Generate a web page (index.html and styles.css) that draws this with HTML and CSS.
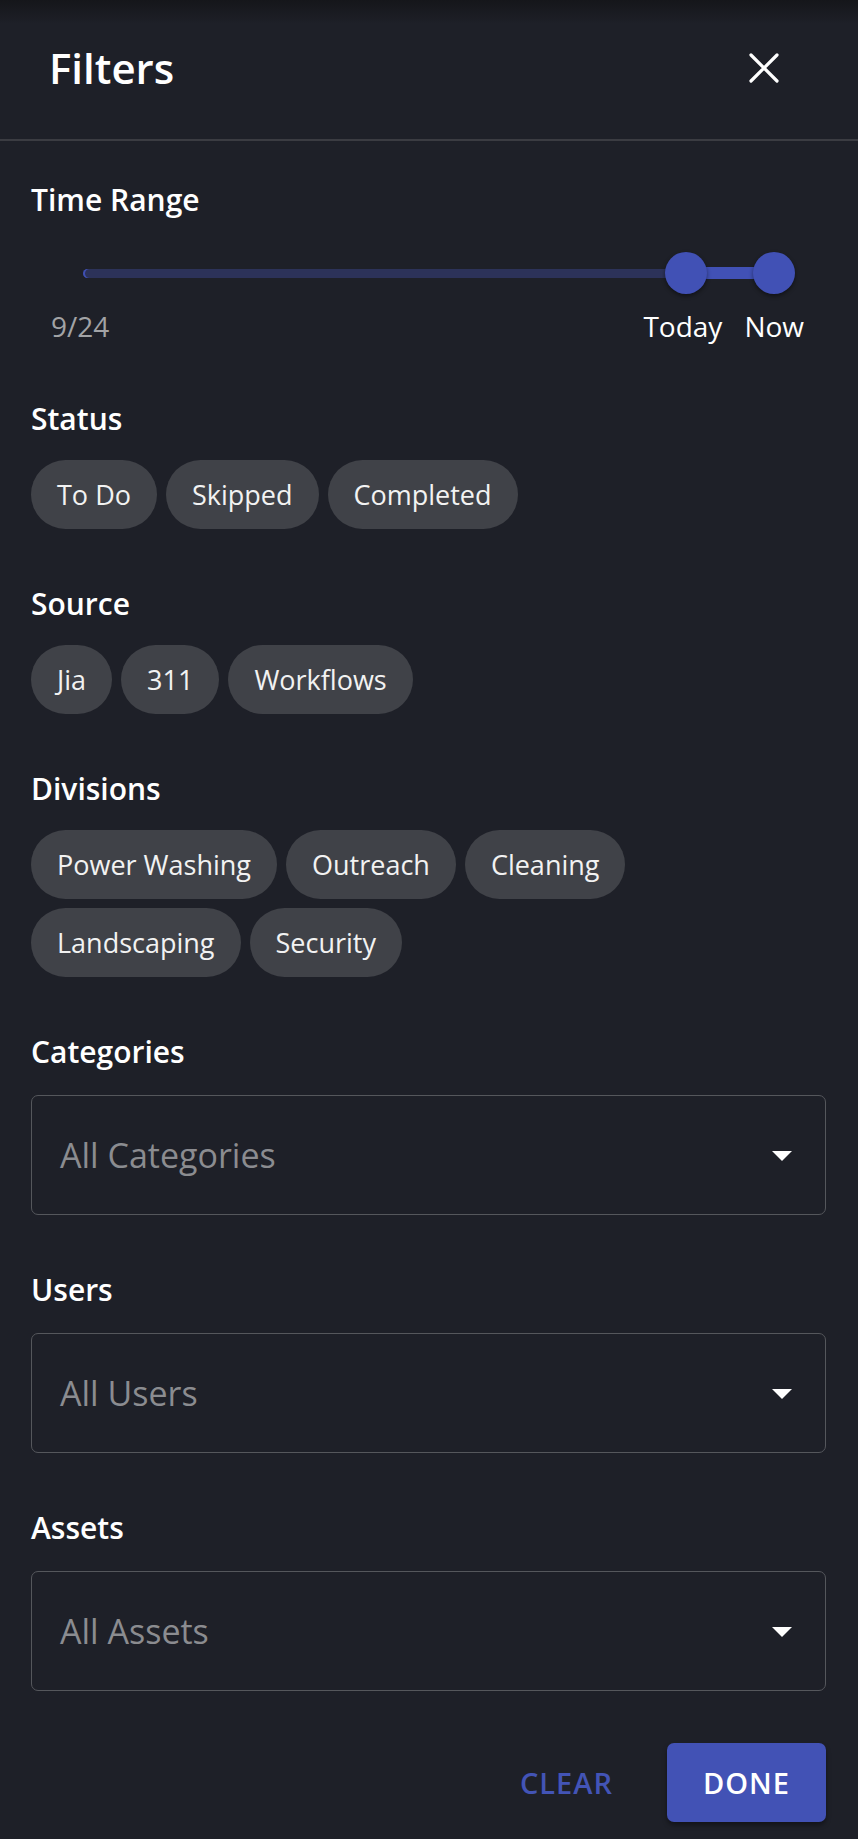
FILE: index.html
```html
<!DOCTYPE html>
<html lang="en">
<head>
<meta charset="utf-8">
<title>Filters</title>
<link rel="stylesheet" href="styles.css">
</head>
<body>
<div class="sheet">
  <header class="sheet-header">
    <h1 class="sheet-title">Filters</h1>
    <button class="icon-btn" aria-label="Close">
      <svg width="30" height="30" viewBox="0 0 30 30" aria-hidden="true">
        <path d="M2 2 L28 28 M28 2 L2 28" stroke="#ffffff" stroke-width="3.2" stroke-linecap="round" fill="none"/>
      </svg>
    </button>
  </header>

  <main class="sheet-body">
    <section class="group group-first">
      <h2 class="group-title">Time Range</h2>
      <div class="slider">
        <div class="slider-track"></div>
        <div class="slider-range"></div>
        <span class="slider-thumb thumb-start"></span>
        <span class="slider-thumb thumb-end"></span>
      </div>
      <div class="slider-labels">
        <span class="label-min">9/24</span>
        <div class="label-group">
          <span>Today</span>
          <span>Now</span>
        </div>
      </div>
    </section>

    <section class="group">
      <h2 class="group-title">Status</h2>
      <div class="chips">
        <button class="chip">To Do</button>
        <button class="chip">Skipped</button>
        <button class="chip">Completed</button>
      </div>
    </section>

    <section class="group">
      <h2 class="group-title">Source</h2>
      <div class="chips">
        <button class="chip">Jia</button>
        <button class="chip">311</button>
        <button class="chip">Workflows</button>
      </div>
    </section>

    <section class="group">
      <h2 class="group-title">Divisions</h2>
      <div class="chips">
        <button class="chip">Power Washing</button>
        <button class="chip">Outreach</button>
        <button class="chip">Cleaning</button>
        <button class="chip">Landscaping</button>
        <button class="chip">Security</button>
      </div>
    </section>

    <section class="group">
      <h2 class="group-title">Categories</h2>
      <div class="select">
        <span class="select-placeholder">All Categories</span>
        <span class="select-caret"></span>
      </div>
    </section>

    <section class="group">
      <h2 class="group-title">Users</h2>
      <div class="select">
        <span class="select-placeholder">All Users</span>
        <span class="select-caret"></span>
      </div>
    </section>

    <section class="group">
      <h2 class="group-title">Assets</h2>
      <div class="select">
        <span class="select-placeholder">All Assets</span>
        <span class="select-caret"></span>
      </div>
    </section>

    <footer class="actions">
      <button class="btn-text">CLEAR</button>
      <button class="btn-primary">DONE</button>
    </footer>
  </main>
</div>
</body>
</html>
```

FILE: styles.css
```css
html, body {
  margin: 0;
  padding: 0;
  background: #1e2028;
}

body {
  font-family: "Open Sans", "Noto Sans", sans-serif;
  color: #ffffff;
}

button {
  font-family: inherit;
  border: 0;
  margin: 0;
  cursor: pointer;
}

.sheet {
  width: 858px;
  min-height: 1839px;
  background: #1e2028;
}

/* Header */
.sheet-header {
  height: 136px;
  padding: 0 79px 3px 49px;
  display: flex;
  align-items: center;
  justify-content: space-between;
  border-bottom: 2px solid #3b3c42;
  background: linear-gradient(#15161a 0, #1e2028 24px);
}

.sheet-title {
  margin: 0;
  font-size: 42px;
  line-height: 52px;
  font-weight: 600;
  color: #ffffff;
}

.icon-btn {
  width: 30px;
  height: 30px;
  padding: 0;
  background: none;
  display: flex;
}

/* Body */
.sheet-body {
  padding: 0 32px 0 31px;
}

.group {
  margin-top: 57px;
}

.group-first {
  margin-top: 41px;
}

.group-title {
  margin: 0;
  font-size: 30px;
  line-height: 36px;
  font-weight: 600;
  color: #ffffff;
}

/* Range slider */
.slider {
  position: relative;
  height: 42px;
  width: 712px;
  margin: 34px 0 0 52px;
  display: flex;
  align-items: center;
}

.slider-track {
  width: 691px;
  height: 9px;
  border-radius: 5px;
  background: #2c3259;
  box-shadow: inset 2px 0 0 #3f4fb2;
}

.slider-range {
  position: absolute;
  left: 603px;
  top: 15px;
  width: 88px;
  height: 12px;
  background: #4151b5;
}

.slider-thumb {
  position: absolute;
  top: 0;
  width: 42px;
  height: 42px;
  border-radius: 50%;
  background: #4151b5;
  box-shadow: 0 2px 4px rgba(0, 0, 0, 0.45);
}

.thumb-start {
  left: 582px;
}

.thumb-end {
  left: 670px;
}

.slider-labels {
  margin-top: 14px;
  display: flex;
  justify-content: space-between;
  align-items: center;
  font-size: 28px;
  line-height: 36px;
}

.label-min {
  margin-left: 20px;
  color: #a2a3a6;
}

.label-group {
  display: flex;
  gap: 22px;
  margin-right: 22px;
  color: #ffffff;
}

/* Chips */
.chips {
  margin-top: 23px;
  display: flex;
  flex-wrap: wrap;
  gap: 9px 9px;
}

.chip {
  height: 69px;
  padding: 0 26px;
  border-radius: 35px;
  background: #404248;
  color: #f2f2f2;
  font-size: 27px;
  line-height: 69px;
  font-weight: 400;
}

/* Select fields */
.select {
  margin-top: 25px;
  height: 120px;
  box-sizing: border-box;
  border: 1.5px solid #55575c;
  border-radius: 7px;
  padding: 0 33px 0 28px;
  display: flex;
  align-items: center;
  justify-content: space-between;
}

.select-placeholder {
  font-size: 34px;
  line-height: 40px;
  color: #8b8c90;
}

.select-caret {
  width: 0;
  height: 0;
  border-left: 10px solid transparent;
  border-right: 10px solid transparent;
  border-top: 10px solid #ffffff;
  margin-top: 2px;
}

/* Footer actions */
.actions {
  margin-top: 52px;
  display: flex;
  justify-content: flex-end;
  align-items: center;
  gap: 30px;
}

.btn-text {
  height: 79px;
  padding: 0 24px;
  background: none;
  color: #4354b6;
  font-size: 29px;
  font-weight: 600;
  letter-spacing: 1px;
}

.btn-primary {
  width: 159px;
  height: 79px;
  border-radius: 7px;
  background: #4252b5;
  color: #ffffff;
  font-size: 29px;
  font-weight: 600;
  letter-spacing: 1px;
  box-shadow: 0 3px 5px rgba(0, 0, 0, 0.4);
}
```
